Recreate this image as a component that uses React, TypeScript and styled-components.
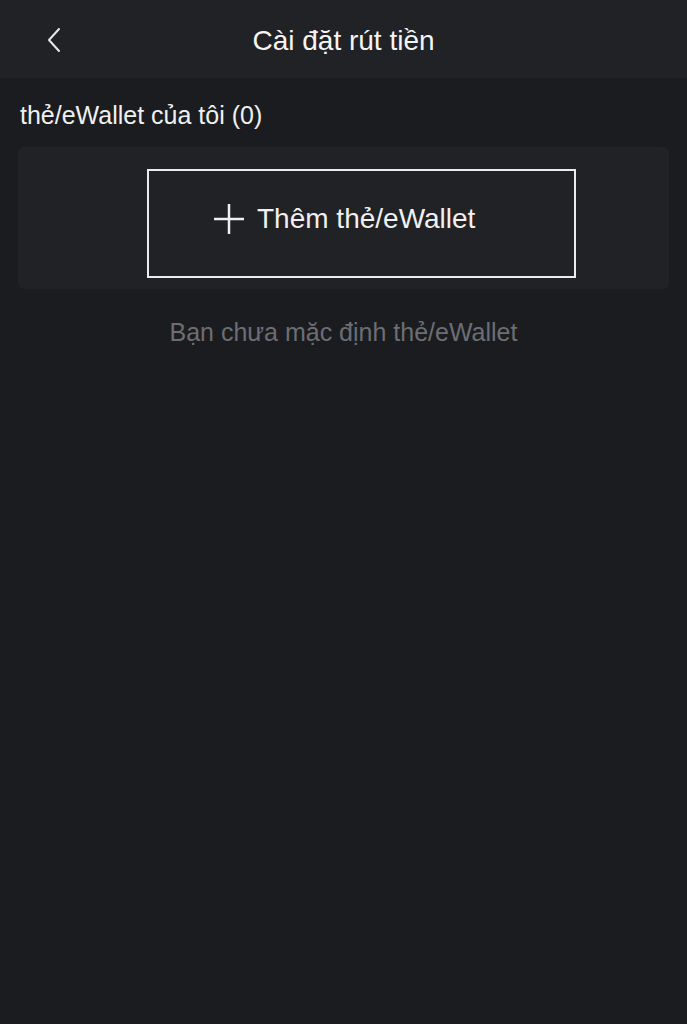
import React from 'react'
import styled, { createGlobalStyle } from 'styled-components'

const GlobalStyle = createGlobalStyle`
  html, body {
    margin: 0;
    padding: 0;
    background: #1b1c1f;
  }
  body {
    font-family: 'Liberation Sans', Arial, sans-serif;
    color: #f2f2f2;
  }
`

const Page = styled.div`
  min-height: 1024px;
  background: #1b1c1f;
  display: flex;
  flex-direction: column;
`

const Header = styled.div`
  height: 78px;
  background: #212225;
  display: flex;
  align-items: center;
  justify-content: center;
  position: relative;
`

const BackButton = styled.button`
  position: absolute;
  left: 40px;
  top: 24px;
  width: 28px;
  height: 32px;
  padding: 0;
  border: 0;
  background: transparent;
  display: flex;
  align-items: center;
  justify-content: center;
  cursor: pointer;
`

const Title = styled.div`
  font-size: 28px;
  color: #f4f4f4;
  margin-top: 4px;
`

const Content = styled.div`
  padding: 0 18px;
  display: flex;
  flex-direction: column;
`

const SectionLabel = styled.div`
  font-size: 25px;
  color: #f0f0f0;
  padding: 23px 0 0 2px;
  height: 45px;
  box-sizing: border-box;
  line-height: 28px;
`

const Card = styled.div`
  margin-top: 24px;
  height: 142px;
  padding-top: 22px;
  box-sizing: border-box;
  background: #212225;
  border-radius: 6px;
  display: flex;
  align-items: flex-start;
`

const AddButton = styled.button`
  margin-left: 129px;
  width: 429px;
  height: 109px;
  box-sizing: border-box;
  border: 2px solid #ececec;
  background: transparent;
  color: #f0f0f0;
  display: flex;
  align-items: center;
  padding: 0 0 10px 64px;
  gap: 12px;
  font-family: inherit;
  font-size: 28px;
  cursor: pointer;
`

const Hint = styled.div`
  text-align: center;
  font-size: 25px;
  color: #6c6e73;
  margin-top: 29px;
`

export default function App() {
  return (
    <>
      <GlobalStyle />
      <Page>
        <Header>
          <BackButton aria-label="back">
            <svg width="16" height="26" viewBox="0 0 16 26" fill="none">
              <path d="M13 2 L3 13 L13 24" stroke="#e8e8e8" strokeWidth="2" strokeLinecap="round" strokeLinejoin="round" />
            </svg>
          </BackButton>
          <Title>Cài đặt rút tiền</Title>
        </Header>
        <Content>
          <SectionLabel>thẻ/eWallet của tôi (0)</SectionLabel>
          <Card>
            <AddButton>
              <svg width="32" height="32" viewBox="0 0 32 32" fill="none">
                <path d="M16 1 V31 M1 16 H31" stroke="#f0f0f0" strokeWidth="2.5" />
              </svg>
              <span>Thêm thẻ/eWallet</span>
            </AddButton>
          </Card>
          <Hint>Bạn chưa mặc định thẻ/eWallet</Hint>
        </Content>
      </Page>
    </>
  )
}
